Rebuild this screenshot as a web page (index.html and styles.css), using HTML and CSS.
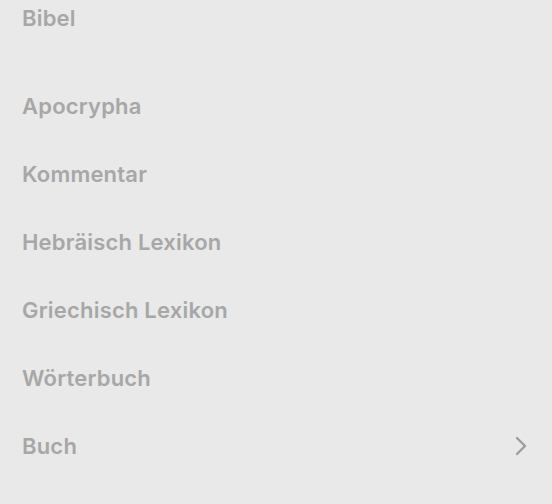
FILE: index.html
```html
<!DOCTYPE html>
<html lang="de">
<head>
    <meta charset="UTF-8">
    <meta name="viewport" content="width=device-width, initial-scale=1.0">
    <title>Bibel</title>
    <link rel="stylesheet" href="styles.css">
</head>
<body>

    <div class="menu">
        <div class="section-title">Bibel</div>

        <ul class="menu-list">
            <li class="menu-item">Apocrypha</li>
            <li class="menu-item">Kommentar</li>
            <li class="menu-item">Hebräisch Lexikon</li>
            <li class="menu-item">Griechisch Lexikon</li>
            <li class="menu-item">Wörterbuch</li>
            <li class="menu-item has-sub">
                <span>Buch</span>
                <svg class="chevron" width="12" height="20" viewBox="0 0 12 20">
                    <path d="M2 2 L10 10 L2 18" fill="none" stroke="#9c9c9c" stroke-width="2.4" stroke-linecap="round" stroke-linejoin="round"/>
                </svg>
            </li>
        </ul>
    </div>

</body>
</html>
```

FILE: styles.css
```css
body {
    font-family: Inter, 'Noto Sans', sans-serif;
    margin: 0;
    background: #e9e9e9;
    height: 100vh;
    overflow: hidden;
}
.menu {
    padding: 0 25px 0 22px;
}
.section-title {
    height: 36px;
    line-height: 36px;
    font-size: 22px;
    font-weight: 600;
    letter-spacing: 0.2px;
    color: #a7a7a7;
    margin-bottom: 36px;
}
.menu-list {
    list-style: none;
    margin: 0;
    padding: 0;
}
.menu-item {
    height: 68px;
    display: flex;
    align-items: center;
    justify-content: space-between;
    font-size: 22px;
    font-weight: 600;
    letter-spacing: 0.2px;
    color: #a7a7a7;
}
.chevron { display: block; }
```
